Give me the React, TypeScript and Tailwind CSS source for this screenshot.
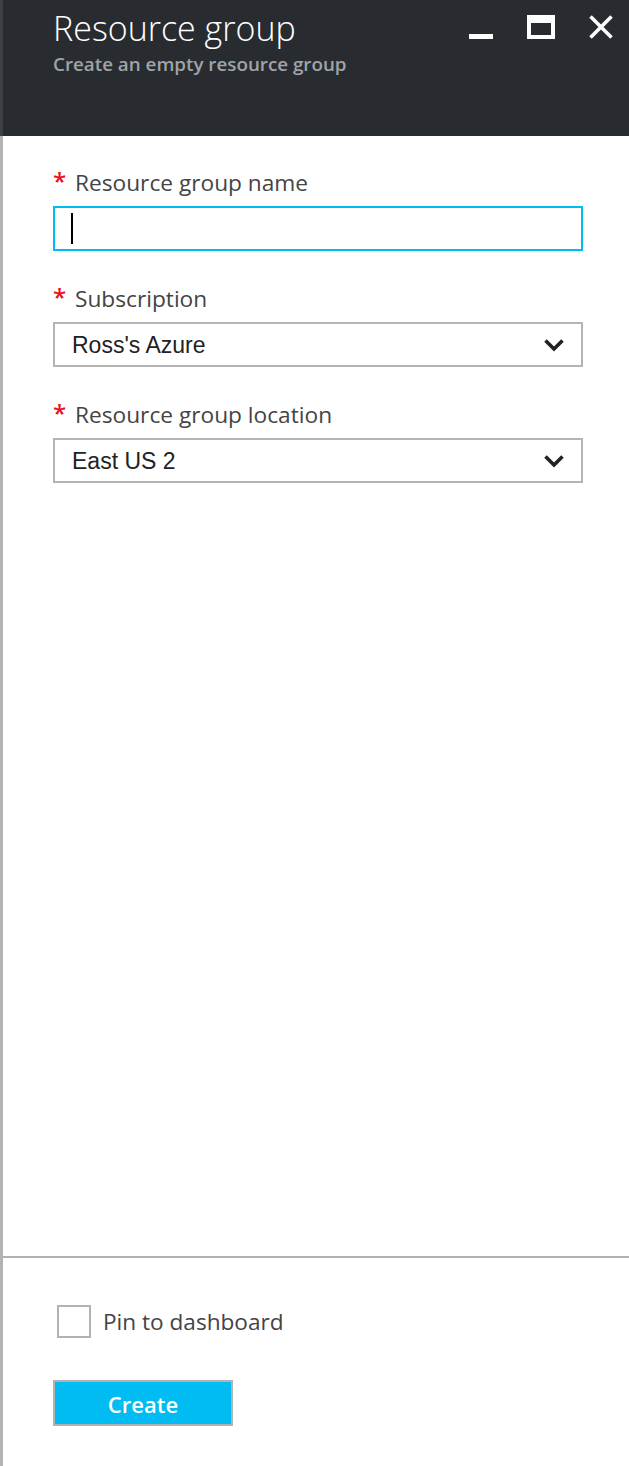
import React from "react";

function Chevron() {
  return (
    <svg width="22" height="14" viewBox="0 0 22 14" className="shrink-0">
      <polyline points="2.5,2.5 11,11 19.5,2.5" fill="none" stroke="#222" strokeWidth="3.6" strokeLinecap="butt" strokeLinejoin="miter" />
    </svg>
  );
}

function Label({ text }: { text: string }) {
  return (
    <div className="flex items-start h-[28px] mb-[9px] text-[22.7px] leading-[28px] text-[#444]" style={{ fontFamily: '"Open Sans", sans-serif' }}>
      <span className="w-[22px] text-[#e81123] text-[24px] leading-[24px] font-semibold">*</span>
      <span>{text}</span>
    </div>
  );
}

function Select({ value }: { value: string }) {
  return (
    <div className="flex h-[45px] items-center justify-between border-2 border-[#b4b4b4] pl-[17px] pr-[16px]">
      <span className="pt-[2px] text-[23px] text-[#222]" style={{ fontFamily: '"Liberation Sans", Arial, sans-serif' }}>{value}</span>
      <Chevron />
    </div>
  );
}

export default function App() {
  return (
    <div className="flex h-[1466px] w-[629px] flex-col bg-white" style={{ fontFamily: '"Open Sans", sans-serif' }}>
      <div className="flex h-[136px] shrink-0 justify-between border-l-[3px] border-[#3d4145] bg-[#282c31] pl-[50px] pr-[16px]">
        <div className="pt-[6px]">
          <div className="text-[34px] font-light leading-[44px] text-white">Resource group</div>
          <div className="mt-[3px] text-[18.8px] font-semibold leading-[22px] text-[#a0a4a8]">Create an empty resource group</div>
        </div>
        <div className="flex items-start pt-[15px]">
          <div className="mt-[19px] h-[5px] w-[24px] bg-white" />
          <div className="ml-[34px] h-[24px] w-[28px] border-x-[4px] border-b-[4px] border-t-[8px] border-white" />
          <svg width="24" height="24" viewBox="0 0 24 24" className="ml-[34px]">
            <line x1="1.5" y1="1.5" x2="22.5" y2="22.5" stroke="white" strokeWidth="3.6" />
            <line x1="22.5" y1="1.5" x2="1.5" y2="22.5" stroke="white" strokeWidth="3.6" />
          </svg>
        </div>
      </div>
      <div className="flex-1 border-l-[3px] border-[#b3b3b3] pl-[50px] pr-[46px] pt-[33px]">
        <Label text="Resource group name" />
        <div className="flex h-[45px] items-center border-2 border-[#00bcf2] pl-[16px]">
          <div className="h-[31px] w-[2px] bg-black" />
        </div>
        <div className="h-[34px]" />
        <Label text="Subscription" />
        <Select value="Ross's Azure" />
        <div className="h-[34px]" />
        <Label text="Resource group location" />
        <Select value="East US 2" />
      </div>
      <div className="h-[210px] shrink-0 border-l-[3px] border-t-2 border-[#b3b3b3] pl-[50px]">
        <div className="mt-[47px] flex items-center">
          <div className="ml-[4px] h-[33px] w-[34px] border-2 border-[#b3b3b3]" />
          <span className="ml-[12px] text-[22.6px] text-[#444]">Pin to dashboard</span>
        </div>
        <button className="mt-[41px] flex h-[46px] w-[180px] items-center justify-center border-2 border-[#b3b3b3] bg-[#00bcf2] pt-[3px] text-[22px] font-semibold text-white">
          Create
        </button>
      </div>
    </div>
  );
}
